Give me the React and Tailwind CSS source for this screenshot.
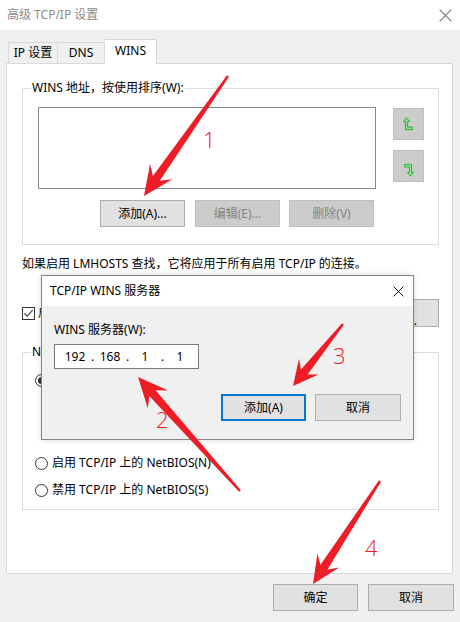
import React from "react";

const FONT = "font-['Noto_Sans','Noto_Sans_CJK_SC',sans-serif]";

// red annotation arrow, tail -> tip
function arrowPoints(tx, ty, px, py, headLen = 29, headHalf = 13.5) {
  const len = Math.hypot(px - tx, py - ty);
  const dx = (px - tx) / len;
  const dy = (py - ty) / len;
  const nx = -dy;
  const ny = dx;
  const neck = headLen * 0.72;
  const pts = [
    [tx + nx * 1.2, ty + ny * 1.2],
    [px - dx * neck + nx * 4.2, py - dy * neck + ny * 4.2],
    [px - dx * headLen + nx * headHalf, py - dy * headLen + ny * headHalf],
    [px, py],
    [px - dx * headLen - nx * headHalf, py - dy * headLen - ny * headHalf],
    [px - dx * neck - nx * 4.2, py - dy * neck - ny * 4.2],
    [tx - nx * 1.2, ty - ny * 1.2],
  ];
  return pts.map((p) => p.map((v) => v.toFixed(1)).join(",")).join(" ");
}

const ARROWS = [
  { t: [228, 76], p: [144, 196], h: 30, w: 13.5 },
  { t: [240, 491], p: [138, 377], h: 30, w: 13.5 },
  { t: [343, 324], p: [293, 386], h: 25, w: 12.5 },
  { t: [380, 481], p: [313, 584], h: 28, w: 13 },
];

const LABELS = [
  { n: "1", x: 203, y: 148 },
  { n: "2", x: 156, y: 428 },
  { n: "3", x: 333, y: 364 },
  { n: "4", x: 365, y: 556 },
];

function Btn({ children, disabled, focused, className = "" }) {
  let cls = "bg-[#e1e1e1] border border-[#adadad] text-black";
  if (disabled) cls = "bg-[#cccccc] border border-[#bfbfbf] text-[#838383]";
  if (focused) cls = "bg-[#e1e1e1] border-2 border-[#0078d7] text-black";
  return (
    <div className={`h-[27px] w-[85px] flex items-center justify-center shrink-0 ${cls} ${className}`}>
      {children}
    </div>
  );
}

function Close({ color, size }) {
  return (
    <svg width={size} height={size} viewBox="0 0 10 10">
      <path d="M0.5 0.5 L9.5 9.5 M9.5 0.5 L0.5 9.5" stroke={color} strokeWidth="0.9" />
    </svg>
  );
}

function Radio({ checked }) {
  return (
    <div className="w-[13px] h-[13px] rounded-full border border-[#333] flex items-center justify-center shrink-0 bg-white">
      {checked && <div className="w-[7px] h-[7px] rounded-full bg-[#333]" />}
    </div>
  );
}

export default function App() {
  return (
    <div className={`relative w-[460px] h-[622px] bg-[#f0f0f0] overflow-hidden text-[12px] leading-[16px] text-black ${FONT}`}>
      {/* Title bar */}
      <div className="h-[30px] bg-white flex items-center justify-between pl-[7px] pr-[8px]">
        <span className="text-[#8a8a8a]">高级 TCP/IP 设置</span>
        <Close color="#7a7a7a" size={13} />
      </div>

      <div className="px-[6px] pt-[9px]">
        {/* Tabs */}
        <div className="flex items-end h-[24px] pl-[2px]">
          <div className="w-[50px] h-[21px] border border-b-0 border-[#d9d9d9] flex items-center justify-center">IP 设置</div>
          <div className="w-[47px] h-[21px] border border-b-0 border-l-0 border-[#d9d9d9] flex items-center justify-center">DNS</div>
          <div className="relative z-10 -mb-px w-[52px] h-[25px] bg-white border border-b-0 border-l-0 border-[#d9d9d9] flex items-center justify-center pb-[2px]">WINS</div>
        </div>

        {/* Panel */}
        <div className="h-[511px] w-[447px] border border-[#d9d9d9] bg-white pl-[15px] pr-[13px] pt-[24px]">
          {/* WINS group */}
          <div className="border border-[#dcdcdc] h-[157px]">
            <div className="-mt-[9px] h-[16px] ml-[8px] px-[1px] bg-white w-fit">WINS 地址，按使用排序(W):</div>
            <div className="flex mt-[11px]">
              <div className="ml-[15px] w-[338px] h-[82px] border border-[#828790] bg-white" />
              <div className="ml-[17px] mt-px flex flex-col gap-[10px]">
                <div className="w-[31px] h-[32px] bg-[#cccccc] border border-[#bfbfbf] flex items-center justify-center">
                  <svg width="11" height="14" viewBox="0 0 11 14">
                    <path d="M3.5 0.7 L6.6 4.5 L4.6 4.5 L4.6 10 L9.6 10 L9.6 12.6 L2.4 12.6 L2.4 4.5 L0.4 4.5 Z" fill="#8fe28f" stroke="#2fae3a" strokeWidth="1" strokeLinejoin="miter" />
                  </svg>
                </div>
                <div className="w-[31px] h-[32px] bg-[#cccccc] border border-[#bfbfbf] flex items-center justify-center pt-[8px]">
                  <svg width="11" height="14" viewBox="0 0 11 14">
                    <path d="M7.5 13.3 L4.4 9.5 L6.4 9.5 L6.4 4 L1.4 4 L1.4 1.4 L8.6 1.4 L8.6 9.5 L10.6 9.5 Z" fill="#8fe28f" stroke="#2fae3a" strokeWidth="1" strokeLinejoin="miter" />
                  </svg>
                </div>
              </div>
            </div>
            <div className="flex mt-[11px] ml-[77px]">
              <Btn>添加(A)...</Btn>
              <Btn disabled className="ml-[10px]">编辑(E)...</Btn>
              <Btn disabled className="ml-[9px]">删除(V)</Btn>
            </div>
          </div>

          <div className="mt-[11px]">如果启用 LMHOSTS 查找，它将应用于所有启用 TCP/IP 的连接。</div>

          <div className="mt-[27px] h-[28px] flex items-center">
            <div className="w-[13px] h-[13px] border border-[#333] bg-white flex items-center justify-center">
              <svg width="11" height="11" viewBox="0 0 11 11">
                <path d="M1.5 5.5 L4.2 8.3 L9.6 2.2" stroke="#333" strokeWidth="1.1" fill="none" />
              </svg>
            </div>
            <span className="ml-[3px]">启用 LMHOSTS 查找(L)</span>
            <Btn className="ml-auto w-[106px] h-[28px]">导入 LMHOSTS(M)...</Btn>
          </div>

          {/* NetBIOS group */}
          <div className="mt-[25px] border border-[#dcdcdc] h-[158px]">
            <div className="-mt-[9px] h-[16px] ml-[8px] px-[1px] bg-white w-fit">NetBIOS 设置</div>
            <div className="ml-[12px] mt-[12px] flex items-center gap-[4px]">
              <Radio checked />
              <span>默认:</span>
            </div>
            <div className="ml-[42px] mt-[4px] leading-[17px] w-[340px]">
              从 DHCP 服务器使用 NetBIOS 设置。如果使用静态 IP 地址或 DHCP 服务器不提供 NetBIOS 设置，则启用 TCP/IP 上的 NetBIOS。
            </div>
            <div className="ml-[12px] mt-[12px] flex items-center gap-[4px]">
              <Radio />
              <span>启用 TCP/IP 上的 NetBIOS(N)</span>
            </div>
            <div className="ml-[12px] mt-[11px] flex items-center gap-[4px]">
              <Radio />
              <span>禁用 TCP/IP 上的 NetBIOS(S)</span>
            </div>
          </div>
        </div>

        {/* Bottom buttons */}
        <div className="mt-[10px] flex justify-end gap-[10px] pl-[262px] w-[448px]">
          <Btn>确定</Btn>
          <Btn className="w-[86px]">取消</Btn>
        </div>
      </div>

      {/* WINS server dialog */}
      <div className="absolute left-[41px] top-[275px] w-[373px] h-[165px] border border-[#858585] bg-[#f0f0f0] shadow-[0_0_6px_rgba(0,0,0,0.15)]">
        <div className="h-[30px] bg-white flex items-center justify-between pl-[8px] pr-[9px]">
          <span>TCP/IP WINS 服务器</span>
          <Close color="#111" size={11} />
        </div>
        <div className="pl-[12px] pr-[12px]">
          <div className="mt-[16px]">WINS 服务器(W):</div>
          <div className="mt-[6px] w-[145px] h-[25px] border border-[#7a7a7a] bg-white flex items-center pl-[7px]">
            <span className="w-[26px] text-center">192</span>
            <span className="w-[9px] text-center">.</span>
            <span className="w-[26px] text-center">168</span>
            <span className="w-[9px] text-center">.</span>
            <span className="w-[26px] text-center">1</span>
            <span className="w-[9px] text-center">.</span>
            <span className="w-[26px] text-center">1</span>
          </div>
          <div className="mt-[25px] flex justify-end gap-[9px]">
            <Btn focused>添加(A)</Btn>
            <Btn className="w-[86px]">取消</Btn>
          </div>
        </div>
      </div>

      {/* Annotations */}
      <svg className="absolute left-0 top-0 pointer-events-none" width="460" height="622">
        {ARROWS.map((a, i) => (
          <polygon key={i} points={arrowPoints(a.t[0], a.t[1], a.p[0], a.p[1], a.h, a.w)} fill="#ee1c25" />
        ))}
        {LABELS.map((l) => (
          <text key={l.n} x={l.x} y={l.y} fill="#ee1c25" fontSize="22" fontFamily="'Open Sans', 'Liberation Sans', sans-serif" fontWeight="300">
            {l.n}
          </text>
        ))}
      </svg>
    </div>
  );
}
